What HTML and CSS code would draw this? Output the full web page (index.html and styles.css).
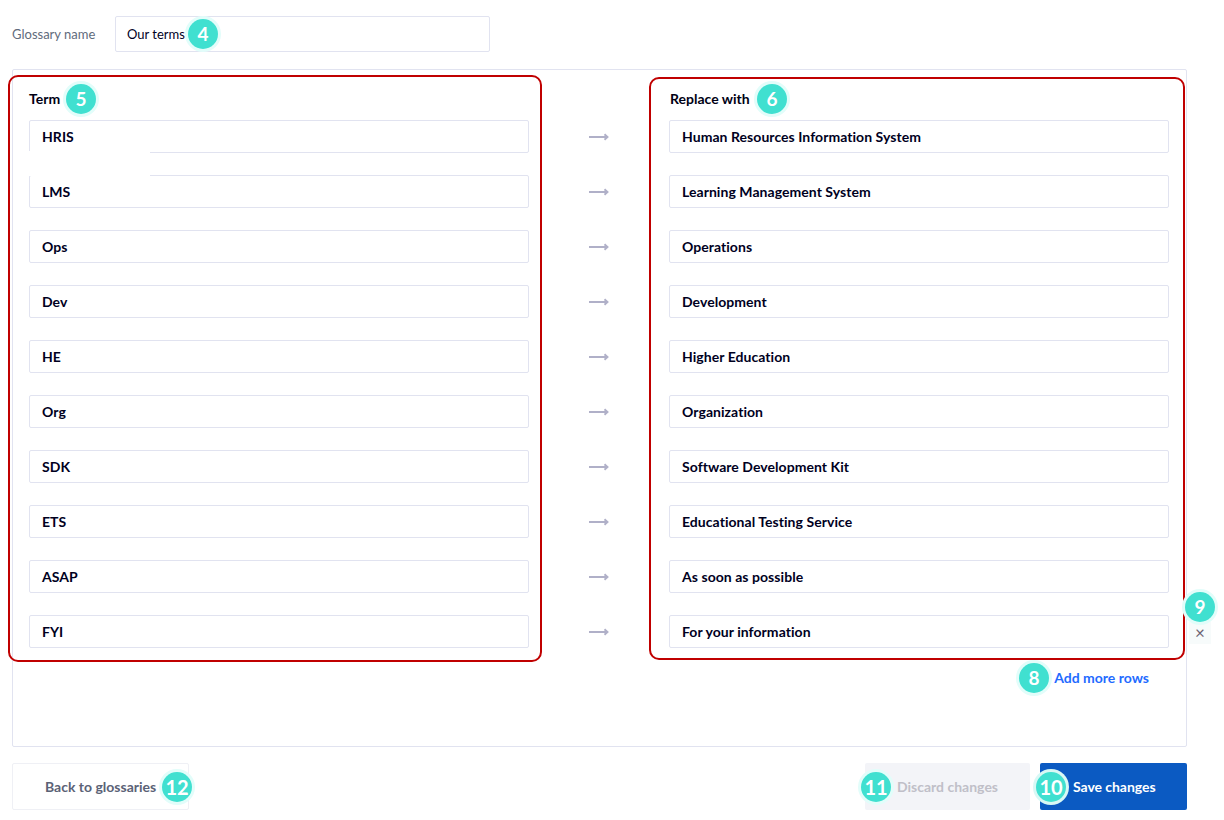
FILE: index.html
```html
<!DOCTYPE html>
<html lang="en">
<head>
<meta charset="utf-8">
<title>Glossary</title>
<link rel="stylesheet" href="styles.css">
</head>
<body>
<div class="page">
  <div class="name-row">
    <label class="name-label">Glossary name</label>
    <div class="name-input">Our terms</div>
  </div>
  <section class="panel">
    <div class="grid">
      <div class="head">Term</div><div></div><div class="head head-r">Replace with</div>
      <div class="field">HRIS</div><svg class="arrow" viewBox="0 0 20 10"><path d="M0.5 5H18M16 2.2L19 5L16 7.8"/></svg><div class="field">Human Resources Information System</div>
      <div class="field">LMS</div><svg class="arrow" viewBox="0 0 20 10"><path d="M0.5 5H18M16 2.2L19 5L16 7.8"/></svg><div class="field">Learning Management System</div>
      <div class="field">Ops</div><svg class="arrow" viewBox="0 0 20 10"><path d="M0.5 5H18M16 2.2L19 5L16 7.8"/></svg><div class="field">Operations</div>
      <div class="field">Dev</div><svg class="arrow" viewBox="0 0 20 10"><path d="M0.5 5H18M16 2.2L19 5L16 7.8"/></svg><div class="field">Development</div>
      <div class="field">HE</div><svg class="arrow" viewBox="0 0 20 10"><path d="M0.5 5H18M16 2.2L19 5L16 7.8"/></svg><div class="field">Higher Education</div>
      <div class="field">Org</div><svg class="arrow" viewBox="0 0 20 10"><path d="M0.5 5H18M16 2.2L19 5L16 7.8"/></svg><div class="field">Organization</div>
      <div class="field">SDK</div><svg class="arrow" viewBox="0 0 20 10"><path d="M0.5 5H18M16 2.2L19 5L16 7.8"/></svg><div class="field">Software Development Kit</div>
      <div class="field">ETS</div><svg class="arrow" viewBox="0 0 20 10"><path d="M0.5 5H18M16 2.2L19 5L16 7.8"/></svg><div class="field">Educational Testing Service</div>
      <div class="field">ASAP</div><svg class="arrow" viewBox="0 0 20 10"><path d="M0.5 5H18M16 2.2L19 5L16 7.8"/></svg><div class="field">As soon as possible</div>
      <div class="field">FYI</div><svg class="arrow" viewBox="0 0 20 10"><path d="M0.5 5H18M16 2.2L19 5L16 7.8"/></svg><div class="field">For your information</div>
    </div>
    <div class="add-row"><a class="add-link">Add more rows</a></div>
  </section>
  <footer class="actions">
    <button class="btn btn-back">Back to glossaries</button>
    <div class="actions-right">
      <button class="btn btn-discard">Discard changes</button>
      <button class="btn btn-save">Save changes</button>
    </div>
  </footer>
</div>

<div class="patch"></div>
<div class="callout callout-term"></div>
<div class="callout callout-replace"></div>
<div class="close-box">×</div>
<span class="badge b4">4</span>
<span class="badge b5">5</span>
<span class="badge b6">6</span>
<span class="badge b8">8</span>
<span class="badge b9">9</span>
<span class="badge b10">10</span>
<span class="badge b11">11</span>
<span class="badge b12">12</span>
</body>
</html>
```

FILE: styles.css
```css
* { box-sizing: border-box; }
html, body { margin: 0; height: 820px; overflow: hidden; background: #fff; }
body { position: relative; font-family: Lato, "Open Sans", sans-serif; color: #00001e; }
.page { padding: 16px 37px 0 12px; }
.name-row { display: flex; align-items: center; height: 36px; }
.name-label { width: 103px; font-size: 13px; color: #5f6b7c; }
.name-input {
  width: 375px; height: 36px; padding-left: 11px; display: flex; align-items: center;
  border: 1px solid #e1e3f0; border-radius: 2px; font-size: 13px; color: #00001e;
}
.panel {
  height: 678px; margin-top: 17px; padding: 18px 17px 0 16px;
  border: 1px solid #e1e3f0; border-radius: 2px;
}
.grid { display: grid; grid-template-columns: 500px 140px 500px; grid-template-rows: 10px; grid-auto-rows: 33px; row-gap: 22px; align-items: center; }
.grid > :nth-child(-n+3) { height: 22px; }
.grid > .head { font-size: 14px; font-weight: 700; align-self: start; line-height: 22px; color: #000014; }
.grid > .head-r { padding-left: 1px; }
.field {
  height: 33px; padding-left: 12px; display: flex; align-items: center; letter-spacing: 0.05px;
  border: 1px solid #e1e3f0; border-radius: 2px; font-size: 14px; font-weight: 700; color: #00001e;
}
.arrow { width: 21px; height: 10px; justify-self: center; fill: none; stroke: #b0b0c8; stroke-width: 1.9; margin-left: -1px; }
.add-row { display: flex; justify-content: flex-end; margin-top: 19px; padding-right: 20px; }
.add-link { font-size: 14px; font-weight: 700; color: #1f6bff; line-height: 22px; }
.actions { display: flex; justify-content: space-between; margin-top: 16px; }
.actions-right { display: flex; gap: 10px; }
.btn { height: 47px; border: 0; border-radius: 2px; font: 700 14px Lato, sans-serif; padding: 0; }
.btn-back { width: 177px; background: #fff; border: 1px solid #eff0f5; color: #5b6276; padding-left: 32px; padding-right: 32px; white-space: nowrap; text-align: left; }
.btn-discard { width: 165px; background: #f3f4f8; color: #c0bfc8; padding-left: 32px; padding-right: 20px; white-space: nowrap; text-align: left; }
.btn-save { width: 147px; background: #0b5ac2; color: #fff; padding-left: 33px; text-align: left; letter-spacing: -0.05px; }

.patch { position: absolute; left: 29px; top: 151px; width: 121px; height: 25px; background: #fff; }
.callout { position: absolute; border: 2px solid #c00000; border-radius: 10px; }
.callout-term { left: 8px; top: 75px; width: 534px; height: 587px; }
.callout-replace { left: 649px; top: 77px; width: 536px; height: 583px; }
.close-box { position: absolute; left: 1189px; top: 622px; width: 22px; height: 22px; background: #f7fbfb; color: #6b6272; font-size: 17px; text-align: center; line-height: 21px; }
.badge {
  position: absolute; width: 30px; height: 30px; border-radius: 50%;
  background: #40e0d0; box-shadow: 0 0 0 3px #e2fdfa; color: #fff; font: 700 19px/30px Lato, sans-serif; text-align: center;
}
.b4 { left: 188px; top: 19px; }
.b5 { left: 66px; top: 84px; }
.b6 { left: 757px; top: 84px; }
.b8 { left: 1019px; top: 663px; }
.b9 { left: 1185px; top: 592px; }
.b10 { left: 1036px; top: 772px; box-shadow: 0 0 0 3px #d8f8f5; font-size: 20px; }
.b11 { left: 861px; top: 772px; font-size: 20px; }
.b12 { left: 162px; top: 772px; font-size: 20px; }
```
